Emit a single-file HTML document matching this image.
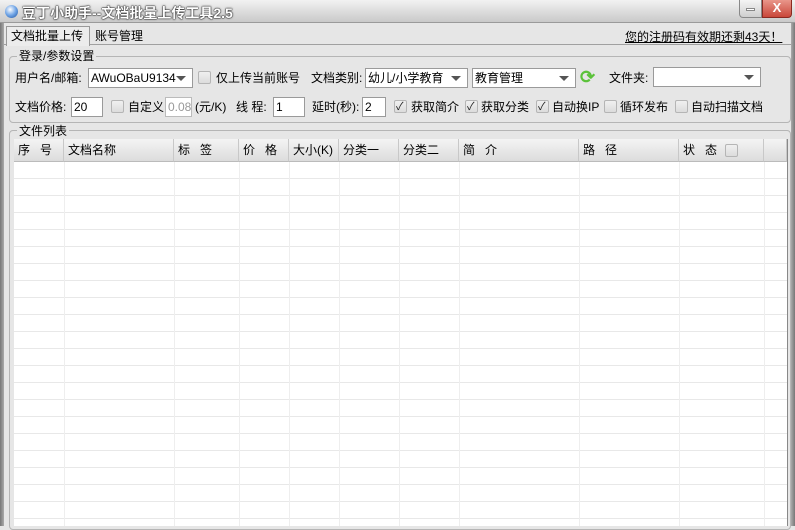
<!DOCTYPE html>
<html><head><meta charset="utf-8"><style>
*{margin:0;padding:0;box-sizing:border-box}
body{width:795px;height:526px;overflow:hidden;background:#e6e6e6;font-family:"Liberation Sans","Noto Sans CJK SC",sans-serif;font-size:12px;color:#000;position:relative}
.a{position:absolute;white-space:nowrap}
.t{font-size:12px;line-height:14px}
.inp{position:absolute;background:#fff;border:1px solid #9a9a9a;height:20px;font-size:12px;line-height:18px;padding-left:2px}
.dd::after{content:"";position:absolute;right:6px;top:7px;border-left:5px solid transparent;border-right:5px solid transparent;border-top:5px solid #555}
.cb{position:absolute;width:13px;height:13px;border:1px solid #b5b5b5;background:linear-gradient(#f0f0f0,#dcdcdc);border-radius:2px}
.cb.k::after{content:"✓";position:absolute;left:1px;top:-3px;font-size:11px;color:#222}
.hd{position:absolute;top:139px;height:23px;background:linear-gradient(#f4f4f4,#dcdcdc);border-right:1px solid #c8c8c8;line-height:23px;padding-left:4px;border-bottom:1px solid #bbb}
.v{position:absolute;top:162px;width:1px;height:364px;background:#eee}
</style></head><body>
<div class="a" style="left:0;top:0;width:795px;height:23px;background:linear-gradient(#f2f2f2,#c9c9c9);border-bottom:1px solid #9a9a9a"></div>
<div class="a" style="left:5px;top:5px;width:13px;height:13px;border-radius:50%;background:radial-gradient(circle at 40% 35%,#fff,#6fa4e6 50%,#1c4f9a)"></div>
<div class="a" style="left:22px;top:3px;font-size:14px;font-weight:bold;color:#fff;text-shadow:0 0 2px #333,0 0 1px #000,0 0 1px #000">豆丁小助手--文档批量上传工具2.5</div>
<div class="a" style="left:739px;top:0;width:23px;height:18px;border:1px solid #888;border-top:none;border-radius:0 0 0 4px;background:linear-gradient(#f4f4f4,#cfcfcf)"><div style="position:absolute;left:6px;top:8px;width:9px;height:3px;background:#fff;border:1px solid #888"></div></div>
<div class="a" style="left:762px;top:0;width:30px;height:18px;border:1px solid #8a2a22;border-top:none;border-radius:0 0 4px 0;background:linear-gradient(#e9968a,#c9473a);color:#fff;font-weight:bold;text-align:center;line-height:16px;font-size:13px">X</div>
<div class="a" style="left:0;top:23px;width:4px;height:503px;background:linear-gradient(90deg,#777,#aaa)"></div>
<div class="a" style="left:4px;top:44px;width:787px;height:1px;background:#a0a0a0"></div>
<div class="a" style="left:6px;top:26px;width:84px;height:20px;background:#ececec;border:1px solid #999;border-bottom:none"></div>
<div class="a t" style="left:11px;top:29px">文档批量上传</div>
<div class="a t" style="left:95px;top:29px">账号管理</div>
<div class="a t" style="left:625px;top:30px;text-decoration:underline">您的注册码有效期还剩43天！</div>
<div class="a" style="left:9px;top:56px;width:782px;height:67px;border:1px solid #b5b5b5;border-radius:4px"></div>
<div class="a t" style="left:17px;top:49px;background:#e6e6e6;padding:0 2px">登录/参数设置</div>
<div class="a t" style="left:15px;top:71px">用户名/邮箱:</div>
<div class="inp dd" style="left:88px;top:68px;width:105px">AWuOBaU9134</div>
<div class="cb" style="left:198px;top:71px"></div>
<div class="a t" style="left:216px;top:71px">仅上传当前账号</div>
<div class="a t" style="left:311px;top:71px">文档类别:</div>
<div class="inp dd" style="left:365px;top:68px;width:103px">幼儿/小学教育</div>
<div class="inp dd" style="left:472px;top:68px;width:104px">教育管理</div>
<div class="a" style="left:580px;top:68px;color:#5bc23a;font-size:18px;font-weight:bold;line-height:18px">⟳</div>
<div class="a t" style="left:609px;top:71px">文件夹:</div>
<div class="inp dd" style="left:653px;top:67px;width:108px"></div>
<div class="a t" style="left:15px;top:100px">文档价格:</div>
<div class="inp" style="left:71px;top:97px;width:32px">20</div>
<div class="cb" style="left:111px;top:100px"></div>
<div class="a t" style="left:128px;top:100px">自定义</div>
<div class="inp" style="left:165px;top:97px;width:27px;color:#999;border-color:#bbb">0.08</div>
<div class="a t" style="left:195px;top:100px">(元/K)</div>
<div class="a t" style="left:236px;top:100px">线 程:</div>
<div class="inp" style="left:273px;top:97px;width:32px">1</div>
<div class="a t" style="left:312px;top:100px">延时(秒):</div>
<div class="inp" style="left:362px;top:97px;width:24px">2</div>
<div class="cb k" style="left:394px;top:100px"></div><div class="a t" style="left:411px;top:100px">获取简介</div>
<div class="cb k" style="left:465px;top:100px"></div><div class="a t" style="left:481px;top:100px">获取分类</div>
<div class="cb k" style="left:536px;top:100px"></div><div class="a t" style="left:552px;top:100px">自动换IP</div>
<div class="cb" style="left:604px;top:100px"></div><div class="a t" style="left:620px;top:100px">循环发布</div>
<div class="cb" style="left:675px;top:100px"></div><div class="a t" style="left:691px;top:100px">自动扫描文档</div>
<div class="a" style="left:9px;top:130px;width:782px;height:400px;border:1px solid #b5b5b5;border-radius:4px"></div>
<div class="a t" style="left:17px;top:124px;background:#e6e6e6;padding:0 2px">文件列表</div>
<div class="a" style="left:14px;top:139px;width:774px;height:387px;background:#fff;border-right:1px solid #888"></div>
<div class="a" style="left:14px;top:162px;width:773px;height:364px;background-image:linear-gradient(180deg,transparent 16px,#e8e8e8 16px);background-size:100% 17px"></div>
<div class="hd" style="left:14px;width:50px">序&nbsp;&nbsp;&nbsp;号</div>
<div class="hd" style="left:64px;width:110px">文档名称</div>
<div class="hd" style="left:174px;width:65px">标&nbsp;&nbsp;&nbsp;签</div>
<div class="hd" style="left:239px;width:50px">价&nbsp;&nbsp;&nbsp;格</div>
<div class="hd" style="left:289px;width:50px">大小(K)</div>
<div class="hd" style="left:339px;width:60px">分类一</div>
<div class="hd" style="left:399px;width:60px">分类二</div>
<div class="hd" style="left:459px;width:120px">简&nbsp;&nbsp;&nbsp;介</div>
<div class="hd" style="left:579px;width:100px">路&nbsp;&nbsp;&nbsp;径</div>
<div class="hd" style="left:679px;width:85px">状&nbsp;&nbsp;&nbsp;态</div>
<div class="cb" style="left:725px;top:144px"></div>
<div class="hd" style="left:764px;width:23px"></div>
<div class="v" style="left:64px"></div><div class="v" style="left:174px"></div><div class="v" style="left:239px"></div>
<div class="v" style="left:289px"></div><div class="v" style="left:339px"></div><div class="v" style="left:399px"></div>
<div class="v" style="left:459px"></div><div class="v" style="left:579px"></div><div class="v" style="left:679px"></div>
<div class="v" style="left:764px"></div>
<div class="a" style="left:791px;top:23px;width:4px;height:503px;background:linear-gradient(90deg,#aaa,#777)"></div>
</body></html>
